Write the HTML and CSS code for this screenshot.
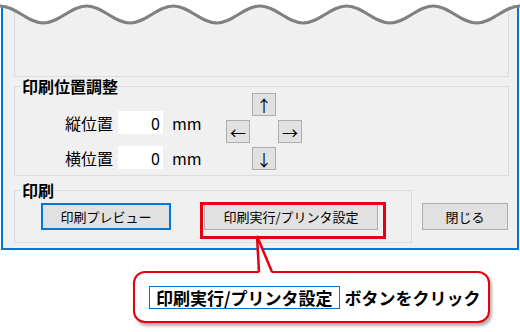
FILE: index.html
```html
<!DOCTYPE html>
<html lang="ja">
<head>
    <meta charset="UTF-8">
    <title>印刷位置調整</title>
    <link rel="stylesheet" href="styles.css">
</head>
<body>
    <div class="window">
        <div class="group group-cut"></div>

        <fieldset class="group pos">
            <legend>印刷位置調整</legend>
            <div class="pos-body">
                <div class="pos-rows">
                    <div class="pos-row">
                        <span class="pos-label">縦位置</span>
                        <input class="num" type="text" value="0">
                        <span class="unit">mm</span>
                    </div>
                    <div class="pos-row">
                        <span class="pos-label">横位置</span>
                        <input class="num" type="text" value="0">
                        <span class="unit">mm</span>
                    </div>
                </div>
                <div class="arrows">
                    <button class="arrow up">↑</button>
                    <button class="arrow left">←</button>
                    <button class="arrow right">→</button>
                    <button class="arrow down">↓</button>
                </div>
            </div>
        </fieldset>

        <div class="print-row">
            <fieldset class="group print">
                <legend>印刷</legend>
                <div class="print-body">
                    <button class="btn btn-preview">印刷プレビュー</button>
                    <button class="btn btn-exec">印刷実行/プリンタ設定</button>
                </div>
            </fieldset>
            <button class="btn btn-close">閉じる</button>
        </div>
    </div>

    <!-- torn top edge -->
    <svg class="wave" width="520" height="30" viewBox="0 0 520 30">
        <path fill="#fff" d="M0,6 C15.8,6 27.6,23 43.3,23 S70.9,6 86.7,6 S114.2,23 130,23 S157.5,6 173.3,6 S200.9,23 216.7,23 S244.2,6 260,6 S287.5,23 303.3,23 S330.9,6 346.7,6 S374.2,23 390,23 S417.5,6 433.3,6 S460.9,23 476.7,23 S504.2,6 520,6 V0 H0 Z"/>
        <path fill="none" stroke="#808080" stroke-width="3" d="M-2,6 L0,6 C15.8,6 27.6,23 43.3,23 S70.9,6 86.7,6 S114.2,23 130,23 S157.5,6 173.3,6 S200.9,23 216.7,23 S244.2,6 260,6 S287.5,23 303.3,23 S330.9,6 346.7,6 S374.2,23 390,23 S417.5,6 433.3,6 S460.9,23 476.7,23 S504.2,6 520,6 L522,6"/>
    </svg>

    <!-- annotation -->
    <div class="highlight"></div>
    <div class="callout">
        <span class="callout-key">印刷実行/プリンタ設定</span>
        <span class="callout-text">ボタンをクリック</span>
    </div>
    <svg class="tail" width="30" height="44" viewBox="0 0 30 44">
        <polygon fill="#fff" points="9,4 11,41.5 24,41.5"/>
        <polyline fill="none" stroke="#e60012" stroke-width="2.5" stroke-linejoin="miter" points="11,40 9,4 24,40"/>
    </svg>
</body>
</html>
```

FILE: styles.css
```css
body {
    margin: 0;
    background: #fff;
    color: #000;
    font-family: "Noto Sans CJK JP", "Noto Sans", sans-serif;
    width: 520px;
    height: 332px;
    overflow: hidden;
}

.window {
    box-sizing: border-box;
    width: 518px;
    height: 250px;
    margin-left: 1px;
    padding: 0 8px 0 11px;
    background: #f0f0f0;
    border: 2px solid #0078d7;
    border-top: 0;
}

.group {
    border: 1px solid #dcdcdc;
}

.group-cut {
    height: 76px;
    border-top: 0;
}

fieldset.group {
    margin: 0;
    padding: 0;
    min-width: 0;
}

fieldset.group legend {
    margin-left: 6px;
    padding: 0 1px;
    font-size: 16px;
    font-weight: bold;
    line-height: 18px;
}

.pos {
    margin-top: 3px;
}

.pos-body {
    display: flex;
    height: 80px;
}

.pos-rows {
    width: 211px;
    padding-top: 16px;
    display: flex;
    flex-direction: column;
    gap: 12px;
}

.pos-row {
    display: flex;
    align-items: center;
    height: 23px;
    font-size: 16px;
}

.pos-label {
    width: 98px;
    text-align: right;
    margin-right: 5px;
}

.num {
    box-sizing: border-box;
    width: 45px;
    height: 23px;
    padding: 0 3px;
    border: 0;
    background: #fff;
    font-family: inherit;
    font-size: 16px;
    text-align: right;
    color: #000;
}

.unit {
    margin-left: 9px;
}

.arrows {
    margin-top: -2px;
    display: grid;
    grid-template-columns: repeat(3, 24px);
    grid-template-rows: repeat(3, 23px);
    column-gap: 2px;
    row-gap: 4px;
}

.arrow {
    padding: 0;
    background: #e1e1e1;
    border: 1px solid #adadad;
    font-family: "Noto Sans CJK JP", sans-serif;
    font-size: 16px;
    line-height: 1;
    color: #000;
}

.arrow.up { grid-column: 2; grid-row: 1; }
.arrow.left { grid-column: 1; grid-row: 2; }
.arrow.right { grid-column: 3; grid-row: 2; }
.arrow.down { grid-column: 2; grid-row: 3; }

.print-row {
    display: flex;
    align-items: flex-start;
    margin-top: 5px;
}

.print {
    box-sizing: border-box;
    width: 398px;
}

.print-body {
    display: flex;
    gap: 33px;
    padding: 4px 0 12px 26px;
}

.btn {
    box-sizing: border-box;
    height: 27px;
    padding: 0;
    background: #e1e1e1;
    border: 1px solid #adadad;
    font-family: inherit;
    font-size: 13px;
    color: #000;
}

.btn-preview {
    width: 130px;
    border: 2px solid #0078d7;
}

.btn-exec {
    width: 174px;
}

.btn-close {
    width: 86px;
    margin: 22px 0 0 10px;
}

.wave {
    position: absolute;
    top: 0;
    left: 0;
}

.highlight {
    position: absolute;
    left: 200px;
    top: 202px;
    width: 186px;
    height: 37px;
    box-sizing: border-box;
    border: 3px solid #e60012;
}

.callout {
    box-sizing: border-box;
    width: 357px;
    height: 52px;
    margin: 21px 0 0 133px;
    padding-left: 14px;
    display: flex;
    align-items: center;
    gap: 5px;
    background: #fff;
    border: 2px solid #e60012;
    border-radius: 12px;
    box-shadow: 2px 3px 3px rgba(0, 0, 0, 0.3);
    font-size: 17px;
    font-weight: bold;
}

.callout-key {
    padding: 0 6px;
    line-height: 21px;
    border: 1px solid #0078d7;
}

.tail {
    position: absolute;
    left: 248px;
    top: 232px;
}
```
